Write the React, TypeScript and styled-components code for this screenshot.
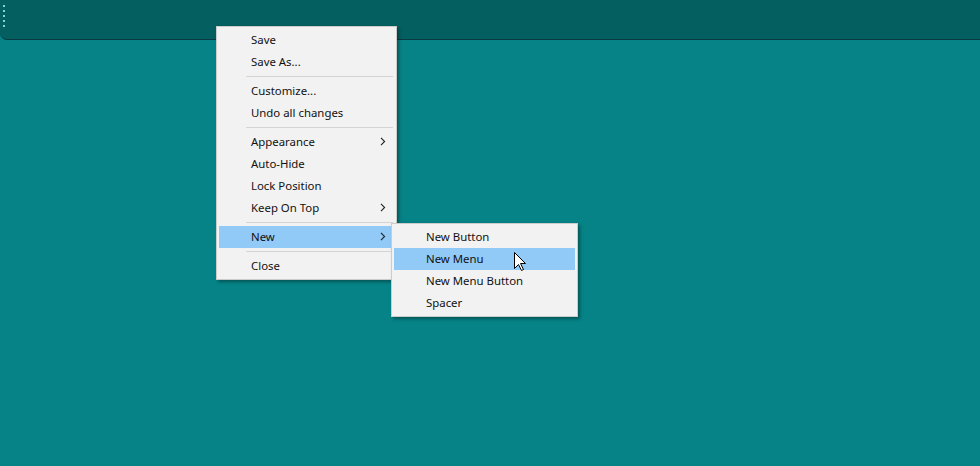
import React from 'react'
import styled, { createGlobalStyle } from 'styled-components'

const Global = createGlobalStyle`
  html, body { margin: 0; padding: 0; background: #068386; }
  body { font-family: "Noto Sans", "Liberation Sans", sans-serif; }
`

const Desktop = styled.div`
  position: relative;
  width: 980px;
  height: 466px;
  background: #068386;
  overflow: hidden;
`

const Toolbar = styled.div`
  height: 40px;
  box-sizing: border-box;
  background: #045f60;
  border-bottom: 1px solid #0b3a44;
  border-bottom-left-radius: 7px;
  display: flex;
  align-items: flex-start;
  padding: 5px 0 0 3px;
`

const Grip = styled.div`
  display: flex;
  flex-direction: column;
  gap: 3px;
  span {
    width: 2px;
    height: 2px;
    background: #7fd6d6;
  }
`

const Menu = styled.div<{ $left: number; $top: number; $width: number }>`
  position: absolute;
  left: ${p => p.$left}px;
  top: ${p => p.$top}px;
  width: ${p => p.$width}px;
  box-sizing: border-box;
  background: #f2f2f2;
  border: 1px solid #cccccc;
  padding: 2px;
  box-shadow: 2px 2px 3px rgba(0, 0, 0, 0.35);
`

const Item = styled.div<{ $active?: boolean }>`
  height: 22px;
  box-sizing: border-box;
  display: flex;
  align-items: center;
  justify-content: space-between;
  padding: 0 8px 1px 32px;
  background: ${p => (p.$active ? '#91c9f7' : 'transparent')};
  color: #111;
  font-size: 11.4px;
  white-space: nowrap;
`

const Separator = styled.div`
  height: 1px;
  margin: 3px 1px 3px 27px;
  background: #d4d4d4;
`

const Cursor = styled.svg`
  position: absolute;
  left: 514px;
  top: 252px;
`

const Chevron = () => (
  <svg width="6" height="9" viewBox="0 0 6 9">
    <polyline points="1,0.8 4.6,4.5 1,8.2" fill="none" stroke="#222" strokeWidth="1.1" />
  </svg>
)

const MenuItem = ({ label, sub, active }: { label: string; sub?: boolean; active?: boolean }) => (
  <Item $active={active}>
    <span>{label}</span>
    {sub && <Chevron />}
  </Item>
)

export default function App() {
  return (
    <Desktop>
      <Global />
      <Toolbar>
        <Grip>
          <span />
          <span />
          <span />
          <span />
          <span />
        </Grip>
      </Toolbar>

      <Menu $left={216} $top={26} $width={181}>
        <MenuItem label="Save" />
        <MenuItem label="Save As..." />
        <Separator />
        <MenuItem label="Customize..." />
        <MenuItem label="Undo all changes" />
        <Separator />
        <MenuItem label="Appearance" sub />
        <MenuItem label="Auto-Hide" />
        <MenuItem label="Lock Position" />
        <MenuItem label="Keep On Top" sub />
        <Separator />
        <MenuItem label="New" sub active />
        <Separator />
        <MenuItem label="Close" />
      </Menu>

      <Menu $left={391} $top={223} $width={187}>
        <MenuItem label="New Button" />
        <MenuItem label="New Menu" active />
        <MenuItem label="New Menu Button" />
        <MenuItem label="Spacer" />
      </Menu>

      <Cursor width="13" height="20" viewBox="0 0 13 20">
        <path d="M0.5,0.5 L0.5,16.5 L4.5,12.5 L7.5,18.5 L9.5,17.5 L6.5,11.5 L11.5,11.5 Z" fill="#fff" stroke="#000" strokeWidth="1" strokeLinejoin="miter" />
      </Cursor>
    </Desktop>
  )
}
